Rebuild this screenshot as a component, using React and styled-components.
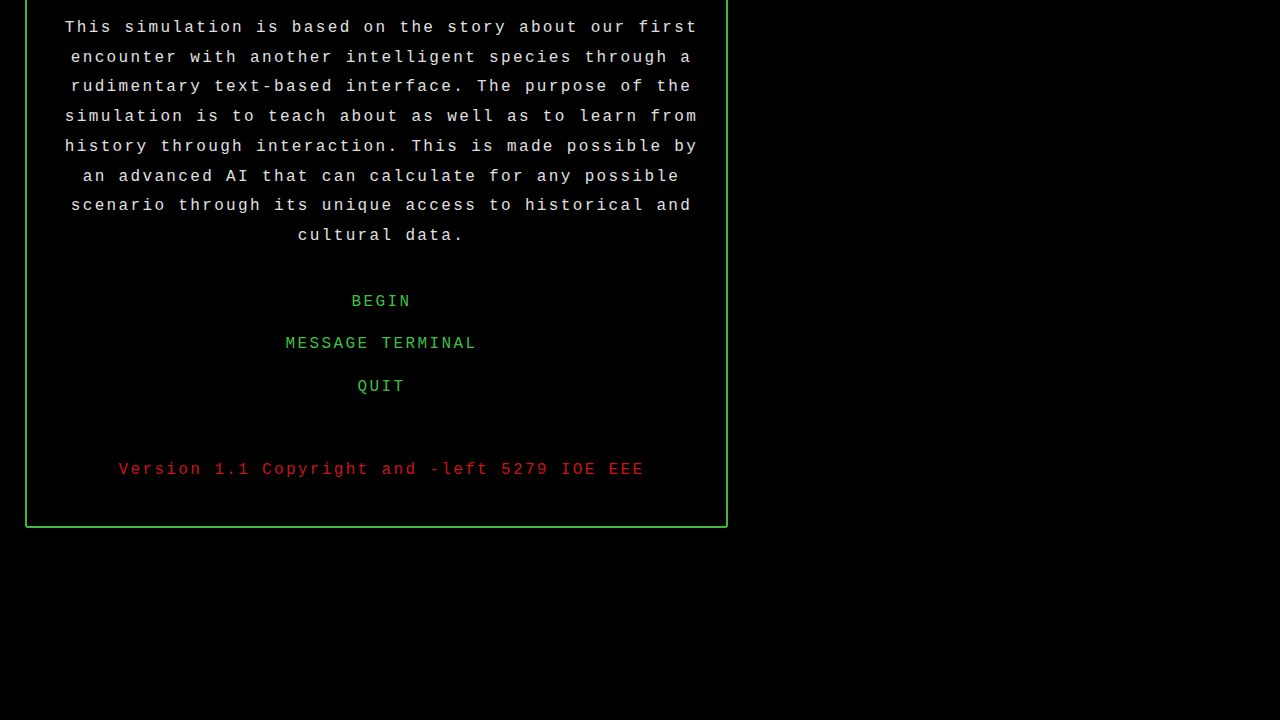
import React from "react";
import styled, { createGlobalStyle } from "styled-components";

const GlobalStyle = createGlobalStyle`
  html, body {
    margin: 0;
    padding: 0;
    background: #000;
  }
  body {
    font-family: "Liberation Mono", "Courier New", monospace;
    overflow: hidden;
  }
`;

const Screen = styled.div`
  width: 1280px;
  height: 720px;
  background: #000;
  overflow: hidden;
`;

const Frame = styled.div`
  box-sizing: border-box;
  width: 703px;
  margin: -20px 0 0 25px;
  padding: 32px 31px 41px 41px;
  border: 2px solid #3fb83f;
  border-radius: 3px;
  display: flex;
  flex-direction: column;
  align-items: center;
`;

const Intro = styled.p`
  margin: 0;
  width: 650px;
  color: #e0e0e0;
  font-size: 16px;
  line-height: 29.7px;
  letter-spacing: 2.35px;
  text-align: center;
`;

const Menu = styled.nav`
  display: flex;
  flex-direction: column;
  align-items: center;
  margin-top: 29px;
`;

const MenuItem = styled.a`
  display: block;
  color: #3fbf3f;
  font-size: 16px;
  line-height: 42.5px;
  letter-spacing: 2.4px;
  text-decoration: none;
  cursor: pointer;
`;

const Version = styled.div`
  margin-top: 47px;
  color: #c8141a;
  font-size: 16px;
  line-height: 30px;
  letter-spacing: 2.35px;
  text-align: center;
`;

const items = ["BEGIN", "MESSAGE TERMINAL", "QUIT"];

export default function App() {
  return (
    <Screen>
      <GlobalStyle />
      <Frame>
        <Intro>
          This simulation is based on the story about our first encounter
          with another intelligent species through a rudimentary text-based
          interface. The purpose of the simulation is to teach about as well
          as to learn from history through interaction. This is made possible
          by an advanced AI that can calculate for any possible scenario
          through its unique access to historical and cultural data.
        </Intro>
        <Menu>
          {items.map((item) => (
            <MenuItem key={item}>{item}</MenuItem>
          ))}
        </Menu>
        <Version>Version 1.1 Copyright and -left 5279 IOE EEE</Version>
      </Frame>
    </Screen>
  );
}
